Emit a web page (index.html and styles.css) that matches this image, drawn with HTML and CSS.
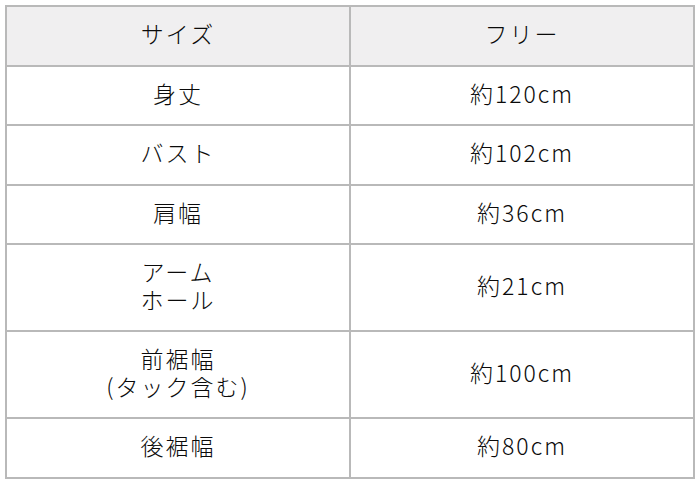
FILE: index.html
```html
<!DOCTYPE html>
<html lang="ja">
<head>
<meta charset="utf-8">
<link rel="stylesheet" href="styles.css">
</head>
<body>
<table class="size-table">
  <tr class="head"><td>サイズ</td><td>フリー</td></tr>
  <tr><td>身丈</td><td>約120cm</td></tr>
  <tr><td>バスト</td><td>約102cm</td></tr>
  <tr><td>肩幅</td><td>約36cm</td></tr>
  <tr><td>アーム<br>ホール</td><td>約21cm</td></tr>
  <tr><td>前裾幅<br>(タック含む)</td><td>約100cm</td></tr>
  <tr><td>後裾幅</td><td>約80cm</td></tr>
</table>
</body>
</html>
```
FILE: styles.css
```css
html, body {
  margin: 0;
  padding: 0;
  background: #fff;
}
body {
  padding: 5px;
  font-family: "Noto Sans CJK JP", "Noto Sans", sans-serif;
  color: #0a0a0a;
}
.size-table {
  border-collapse: collapse;
  width: 690px;
  table-layout: fixed;
}
.size-table td {
  width: 50%;
  border: 2px solid #b9b9b9;
  text-align: center;
  vertical-align: middle;
  font-size: 23px;
  font-weight: 300;
  line-height: 27.5px;
  padding: 13px 0 17px;
  letter-spacing: 2px;
}
.size-table .head td {
  background: #f0eff0;
}
```
